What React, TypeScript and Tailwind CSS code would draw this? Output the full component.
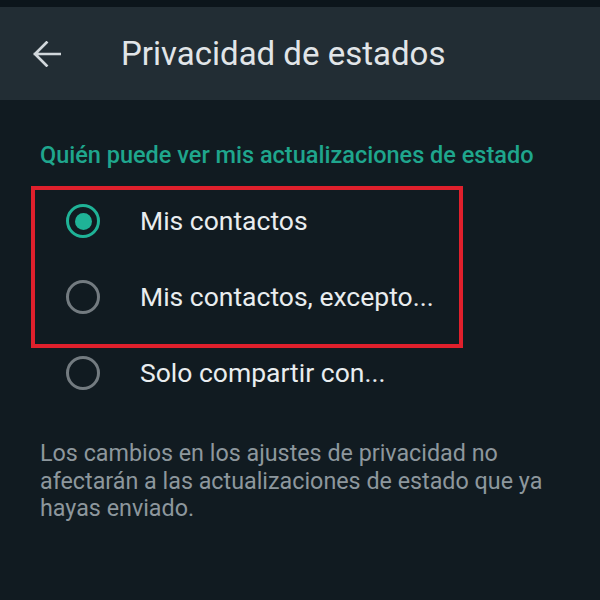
type Option = { label: string; selected?: boolean };

const options: Option[] = [
  { label: "Mis contactos", selected: true },
  { label: "Mis contactos, excepto..." },
  { label: "Solo compartir con..." },
];

const BackArrow = () => (
  <svg width="28" height="26" viewBox="0 0 28 26" fill="none" className="text-[#d1d7db]">
    <path
      d="M27 13H2M13.5 1.5L2 13l11.5 11.5"
      stroke="currentColor"
      strokeWidth="2.7"
      strokeLinecap="square"
    />
  </svg>
);

const Radio = ({ selected }: { selected?: boolean }) =>
  selected ? (
    <span className="flex h-[34px] w-[34px] items-center justify-center rounded-full border-[3px] border-[#1fb397]">
      <span className="h-[17px] w-[17px] rounded-full bg-[#1fb397]" />
    </span>
  ) : (
    <span className="h-[34px] w-[34px] rounded-full border-[3px] border-[#737b80]" />
  );

const OptionRow = ({ label, selected }: Option) => (
  <div className="flex h-[62px] items-center gap-[40px]">
    <Radio selected={selected} />
    <span className="text-[26.5px] text-[#e9edef]">{label}</span>
  </div>
);

export default function App() {
  return (
    <div className="flex h-[600px] w-[600px] flex-col bg-[#111b21] font-['Roboto',sans-serif]">
      <div className="h-[7px] bg-[#0c151b]" />

      {/* Toolbar */}
      <header className="flex h-[93px] items-center bg-[#222d34]">
        <div className="ml-[33px]">
          <BackArrow />
        </div>
        <h1 className="ml-[60px] text-[33px] text-[#e1e5e8]">Privacidad de estados</h1>
      </header>

      <p className="px-[40px] pt-[41px] text-[23.5px] font-medium leading-[28px] text-[#1fa68d]">
        Quién puede ver mis actualizaciones de estado
      </p>

      {/* Options; the first two are framed */}
      <div className="ml-[31px] mt-[17px] flex w-[432px] flex-col gap-[14px] border-[4px] border-[#e0202c] pb-[16px] pl-[31px]">
        {options.slice(0, 2).map((o) => (
          <OptionRow key={o.label} {...o} />
        ))}
      </div>
      <div className="-mt-[6px] pl-[66px]">
        <OptionRow {...options[2]} />
      </div>

      <p className="mt-[36px] px-[40px] text-[23.3px] leading-[27.5px] text-[#8d979d]">
        Los cambios en los ajustes de privacidad no afectarán a las actualizaciones de estado que ya
        hayas enviado.
      </p>
    </div>
  );
}
